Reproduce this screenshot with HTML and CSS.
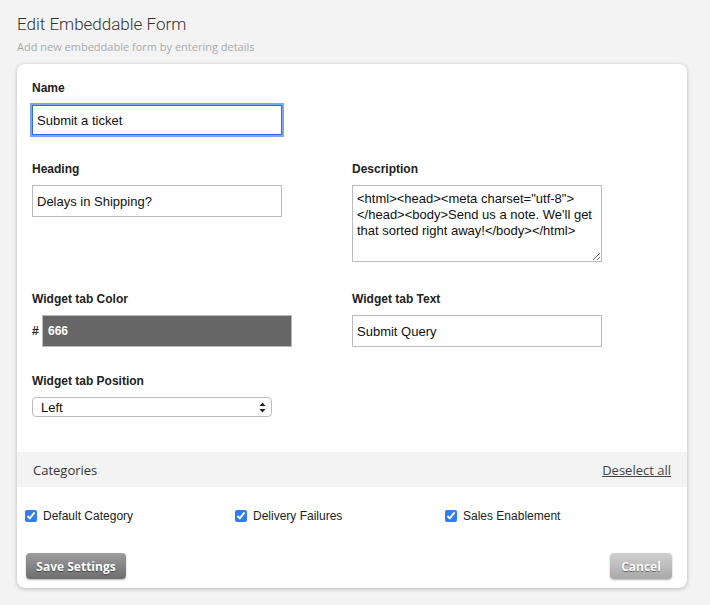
FILE: index.html
```html
<!DOCTYPE html>
<html lang="en">
<head>
    <meta charset="UTF-8">
    <title>Edit Embeddable Form</title>
    <link rel="stylesheet" href="styles.css">
</head>
<body>
    <div class="page-header">
        <h1>Edit Embeddable Form</h1>
        <p class="subtitle">Add new embeddable form by entering details</p>
    </div>

    <div class="card">
        <div class="form-grid">
            <div class="field">
                <label for="name">Name</label>
                <input type="text" id="name" class="text-input focused" value="Submit a ticket">
            </div>
            <div></div>

            <div class="field">
                <label for="heading">Heading</label>
                <input type="text" id="heading" class="text-input" value="Delays in Shipping?">
            </div>
            <div class="field">
                <label for="description">Description</label>
                <textarea id="description" class="text-area">&lt;html&gt;&lt;head&gt;&lt;meta charset="utf-8"&gt;&lt;/head&gt;&lt;body&gt;Send us a note. We'll get that sorted right away!&lt;/body&gt;&lt;/html&gt;</textarea>
            </div>

            <div class="field">
                <label for="tabColor">Widget tab Color</label>
                <div class="color-row">
                    <span class="hash">#</span>
                    <input type="text" id="tabColor" class="color-input" value="666">
                </div>
            </div>
            <div class="field">
                <label for="tabText">Widget tab Text</label>
                <input type="text" id="tabText" class="text-input" value="Submit Query">
            </div>

            <div class="field">
                <label for="tabPosition">Widget tab Position</label>
                <div class="select-wrap">
                    <select id="tabPosition" class="select">
                        <option>Left</option>
                        <option>Right</option>
                    </select>
                    <svg class="select-arrows" width="7" height="11" viewBox="0 0 7 11">
                        <path d="M3.5 0.5 L6.5 4 L0.5 4 Z" fill="#222"/>
                        <path d="M3.5 10.5 L6.5 7 L0.5 7 Z" fill="#222"/>
                    </svg>
                </div>
            </div>
        </div>

        <div class="categories-bar">
            <span>Categories</span>
            <a href="#" class="deselect">Deselect all</a>
        </div>

        <div class="categories">
            <label class="check"><input type="checkbox" checked> Default Category</label>
            <label class="check"><input type="checkbox" checked> Delivery Failures</label>
            <label class="check"><input type="checkbox" checked> Sales Enablement</label>
        </div>

        <div class="actions">
            <button class="btn btn-save">Save Settings</button>
            <button class="btn btn-cancel">Cancel</button>
        </div>
    </div>
</body>
</html>
```

FILE: styles.css
```css
body {
    margin: 0;
    background-color: #f3f3f3;
    font-family: "Liberation Sans", Arial, sans-serif;
    color: #222;
    padding: 13px 23px 17px 17px;
}
.page-header h1 {
    margin: 0;
    font-family: Roboto, "Liberation Sans", sans-serif;
    font-weight: 300;
    font-size: 17px;
    line-height: 22px;
    color: #333;
}
.subtitle {
    margin: 5px 0 0;
    font-family: "Open Sans", sans-serif;
    font-size: 11px;
    line-height: 14px;
    color: #aaa;
}
.card {
    margin-top: 10px;
    background-color: white;
    border-radius: 8px;
    box-shadow: 0 1px 4px rgba(0, 0, 0, 0.25);
    overflow: hidden;
}
.form-grid {
    display: grid;
    grid-template-columns: 320px 1fr;
    row-gap: 27px;
    padding: 17px 15px 35px;
}
.field label {
    display: block;
    font-size: 12px;
    font-weight: bold;
    line-height: 14px;
    margin-bottom: 9px;
    color: #222;
}
.text-input {
    box-sizing: border-box;
    width: 250px;
    height: 32px;
    border: 1px solid #bbb;
    padding: 0 4px;
    font-family: "Liberation Sans", Arial, sans-serif;
    font-size: 13px;
    color: #111;
    outline: none;
}
.text-input.focused {
    height: 30px;
    border: 1px solid #2f6ee8;
    box-shadow: 0 0 0 2px #7aa6f5;
    margin-top: 1px;
}
.text-area {
    display: block;
    box-sizing: border-box;
    width: 250px;
    height: 77px;
    margin-top: 2px;
    margin-bottom: 3px;
    border: 1px solid #bbb;
    padding: 5px 4px;
    font-family: "Liberation Sans", Arial, sans-serif;
    font-size: 13px;
    line-height: 16px;
    color: #111;
    resize: both;
}
.color-row {
    display: flex;
    align-items: center;
}
.hash {
    font-size: 12px;
    font-weight: bold;
    width: 10px;
}
.color-input {
    box-sizing: border-box;
    width: 250px;
    height: 32px;
    border: 1px solid #bbb;
    background-color: #666;
    color: white;
    font-family: "Liberation Sans", Arial, sans-serif;
    font-size: 12px;
    font-weight: bold;
    padding: 0 5px;
}
.select-wrap {
    position: relative;
    width: 240px;
    margin-top: 2px;
}
.select {
    appearance: none;
    box-sizing: border-box;
    width: 240px;
    height: 20px;
    border: 1px solid #bbb;
    border-radius: 4px;
    background-color: white;
    padding: 0 8px;
    font-family: "Liberation Sans", Arial, sans-serif;
    font-size: 13px;
    color: #111;
}
.select-arrows {
    position: absolute;
    right: 6px;
    top: 5px;
    pointer-events: none;
}
.categories-bar {
    display: flex;
    justify-content: space-between;
    align-items: center;
    height: 35px;
    padding: 0 16px;
    background-color: #f3f3f3;
    font-family: "Open Sans", sans-serif;
    font-size: 13px;
    color: #333;
}
.deselect {
    color: #444;
    text-decoration: underline;
}
.categories {
    display: grid;
    grid-template-columns: 210px 210px 1fr;
    padding: 22px 8px 0;
}
.check {
    display: flex;
    align-items: center;
    font-size: 12px;
    color: #222;
    line-height: 14px;
}
.check input {
    margin: 0 6px 0 0;
    width: 12px;
    height: 12px;
    accent-color: #2f7cf6;
}
.actions {
    display: flex;
    justify-content: space-between;
    padding: 30px 15px 9px 9px;
}
.btn {
    height: 26px;
    border: none;
    border-radius: 4px;
    font-family: "Open Sans", sans-serif;
    font-size: 12px;
    font-weight: bold;
    color: white;
    text-shadow: 0 1px 1px rgba(0, 0, 0, 0.45);
    box-shadow: 0 1px 2px rgba(0, 0, 0, 0.3);
    cursor: pointer;
}
.btn-save {
    width: 100px;
    background: linear-gradient(#9c9c9c, #6e6e6e);
}
.btn-cancel {
    width: 62px;
    background: linear-gradient(#d0d0d0, #a9a9a9);
}
```
